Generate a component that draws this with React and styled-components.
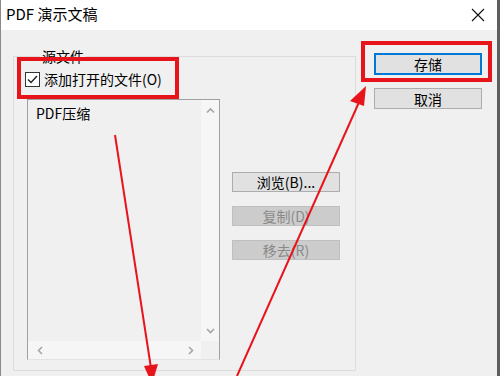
import React from "react";
import styled, { createGlobalStyle } from "styled-components";

const GlobalStyle = createGlobalStyle`
  html, body {
    margin: 0;
    padding: 0;
    background: #5e5e5e;
  }
  body {
    font-family: "Noto Sans CJK SC", "Noto Sans", sans-serif;
    color: #000;
  }
`;

const Window = styled.div`
  position: relative;
  width: 497px;
  height: 376px;
  box-sizing: border-box;
  border-left: 1px solid #8a8a8a;
  background: #f0f0f0;
  display: flex;
  flex-direction: column;
  overflow: hidden;
`;

const TitleBar = styled.div`
  height: 30px;
  flex: none;
  background: #fff;
  display: flex;
  align-items: center;
  justify-content: space-between;
  padding: 0 12px 0 5px;
`;

const Title = styled.span`
  font-size: 15px;
  line-height: 20px;
  margin-top: -3px;
`;

const Body = styled.div`
  flex: 1;
  display: flex;
  align-items: flex-start;
  gap: 18px;
  padding: 17px 0 0 12px;
`;

const GroupBox = styled.fieldset`
  margin: 0;
  width: 343px;
  box-sizing: border-box;
  min-width: 0;
  padding: 4px 14px 10px 13px;
  border: 1px solid #dcdcdc;
  border-radius: 0;
`;

const Legend = styled.legend`
  margin-left: 13px;
  padding: 0 2px;
  font-size: 14px;
  line-height: 18px;
`;

const CheckRow = styled.label`
  display: flex;
  align-items: center;
  gap: 4px;
  height: 20px;
  margin-left: -2px;
  font-size: 14px;
  line-height: 20px;
`;

const CheckMark = styled.svg`
  flex: none;
  width: 15px;
  height: 15px;
`;

const SourceArea = styled.div`
  display: flex;
  gap: 12px;
  margin-top: 10px;
`;

const ListBox = styled.div`
  width: 193px;
  height: 261px;
  box-sizing: border-box;
  border-style: solid;
  border-width: 1px;
  border-color: #a0a0a0 #a0a0a0 #e3e3e3 #a0a0a0;
  display: flex;
  flex-direction: column;
`;

const ListMain = styled.div`
  flex: 1;
  display: flex;
  min-height: 0;
`;

const ListItems = styled.div`
  flex: 1;
  padding: 3px 0 0 8px;
  font-size: 14px;
  line-height: 20px;
`;

const VScroll = styled.div`
  width: 18px;
  background: #f6f6f6;
  display: flex;
  flex-direction: column;
  justify-content: space-between;
  align-items: center;
  padding: 6px 0;
`;

const HScrollRow = styled.div`
  height: 18px;
  flex: none;
  display: flex;
`;

const HScroll = styled.div`
  flex: 1;
  background: #f6f6f6;
  display: flex;
  justify-content: space-between;
  align-items: center;
  padding: 0 6px 0 8px;
`;

const Corner = styled.div`
  width: 18px;
  background: #f0f0f0;
`;

const Chevron = styled.svg`
  width: 9px;
  height: 9px;
`;

const ButtonColumn = styled.div`
  display: flex;
  flex-direction: column;
  gap: ${(p) => p.$gap}px;
  padding-top: ${(p) => p.$top}px;
`;

const Button = styled.button`
  width: 108px;
  height: ${(p) => p.$h}px;
  box-sizing: border-box;
  padding: 0;
  font-family: inherit;
  font-size: 14px;
  line-height: 18px;
  background: ${(p) => (p.disabled ? "#cccccc" : "#e1e1e1")};
  color: ${(p) => (p.disabled ? "#8a8a8a" : "#000")};
  border: ${(p) =>
    p.$default ? "2px solid #0078d7" : `1px solid ${p.disabled ? "#bfbfbf" : "#adadad"}`};
`;

const Overlay = styled.svg`
  position: absolute;
  left: -1px;
  top: 0;
  width: 500px;
  height: 376px;
  pointer-events: none;
`;

const up = "M1 6.5 L4.5 3 L8 6.5";
const down = "M1 3 L4.5 6.5 L8 3";
const left = "M6 1 L2.5 4.5 L6 8";
const right = "M3 1 L6.5 4.5 L3 8";

const Arrow = ({ d }) => (
  <Chevron viewBox="0 0 9 9">
    <path d={d} fill="none" stroke="#a6a6a6" strokeWidth="1.6" />
  </Chevron>
);

const App = () => (
  <>
    <GlobalStyle />
    <Window>
      <TitleBar>
        <Title>PDF 演示文稿</Title>
        <svg width="14" height="14" viewBox="0 0 14 14">
          <path d="M1 1 L13 13 M13 1 L1 13" stroke="#111" strokeWidth="1.1" />
        </svg>
      </TitleBar>
      <Body>
        <GroupBox>
          <Legend>源文件</Legend>
          <CheckRow>
            <CheckMark viewBox="0 0 15 15">
              <rect x="0.5" y="0.5" width="14" height="14" fill="#fff" stroke="#333" />
              <path d="M3 7.5 L6 10.5 L12 4" fill="none" stroke="#222" strokeWidth="1.4" />
            </CheckMark>
            添加打开的文件(O)
          </CheckRow>
          <SourceArea>
            <ListBox>
              <ListMain>
                <ListItems>PDF压缩</ListItems>
                <VScroll>
                  <Arrow d={up} />
                  <Arrow d={down} />
                </VScroll>
              </ListMain>
              <HScrollRow>
                <HScroll>
                  <Arrow d={left} />
                  <Arrow d={right} />
                </HScroll>
                <Corner />
              </HScrollRow>
            </ListBox>
            <ButtonColumn $gap={14} $top={73}>
              <Button $h={20}>浏览(B)...</Button>
              <Button $h={20} disabled>
                复制(D)
              </Button>
              <Button $h={20} disabled>
                移去(R)
              </Button>
            </ButtonColumn>
          </SourceArea>
        </GroupBox>
        <ButtonColumn $gap={13} $top={6}>
          <Button $h={22} $default>
            存储
          </Button>
          <Button $h={21}>取消</Button>
        </ButtonColumn>
      </Body>
      <Overlay viewBox="0 0 500 376">
        <g fill="none" stroke="#e8141c" strokeWidth="4">
          <rect x="19" y="59" width="158" height="38" />
          <rect x="363" y="43" width="127" height="37" />
        </g>
        <g stroke="#e8141c" strokeWidth="2">
          <line x1="115" y1="135" x2="151" y2="368" />
          <line x1="237" y1="376" x2="360" y2="100" />
        </g>
        <g fill="#e8141c">
          <polygon points="152,384 144,366 158,364" />
          <polygon points="366,86 350,101 364,106" />
        </g>
      </Overlay>
    </Window>
  </>
);

export default App;
